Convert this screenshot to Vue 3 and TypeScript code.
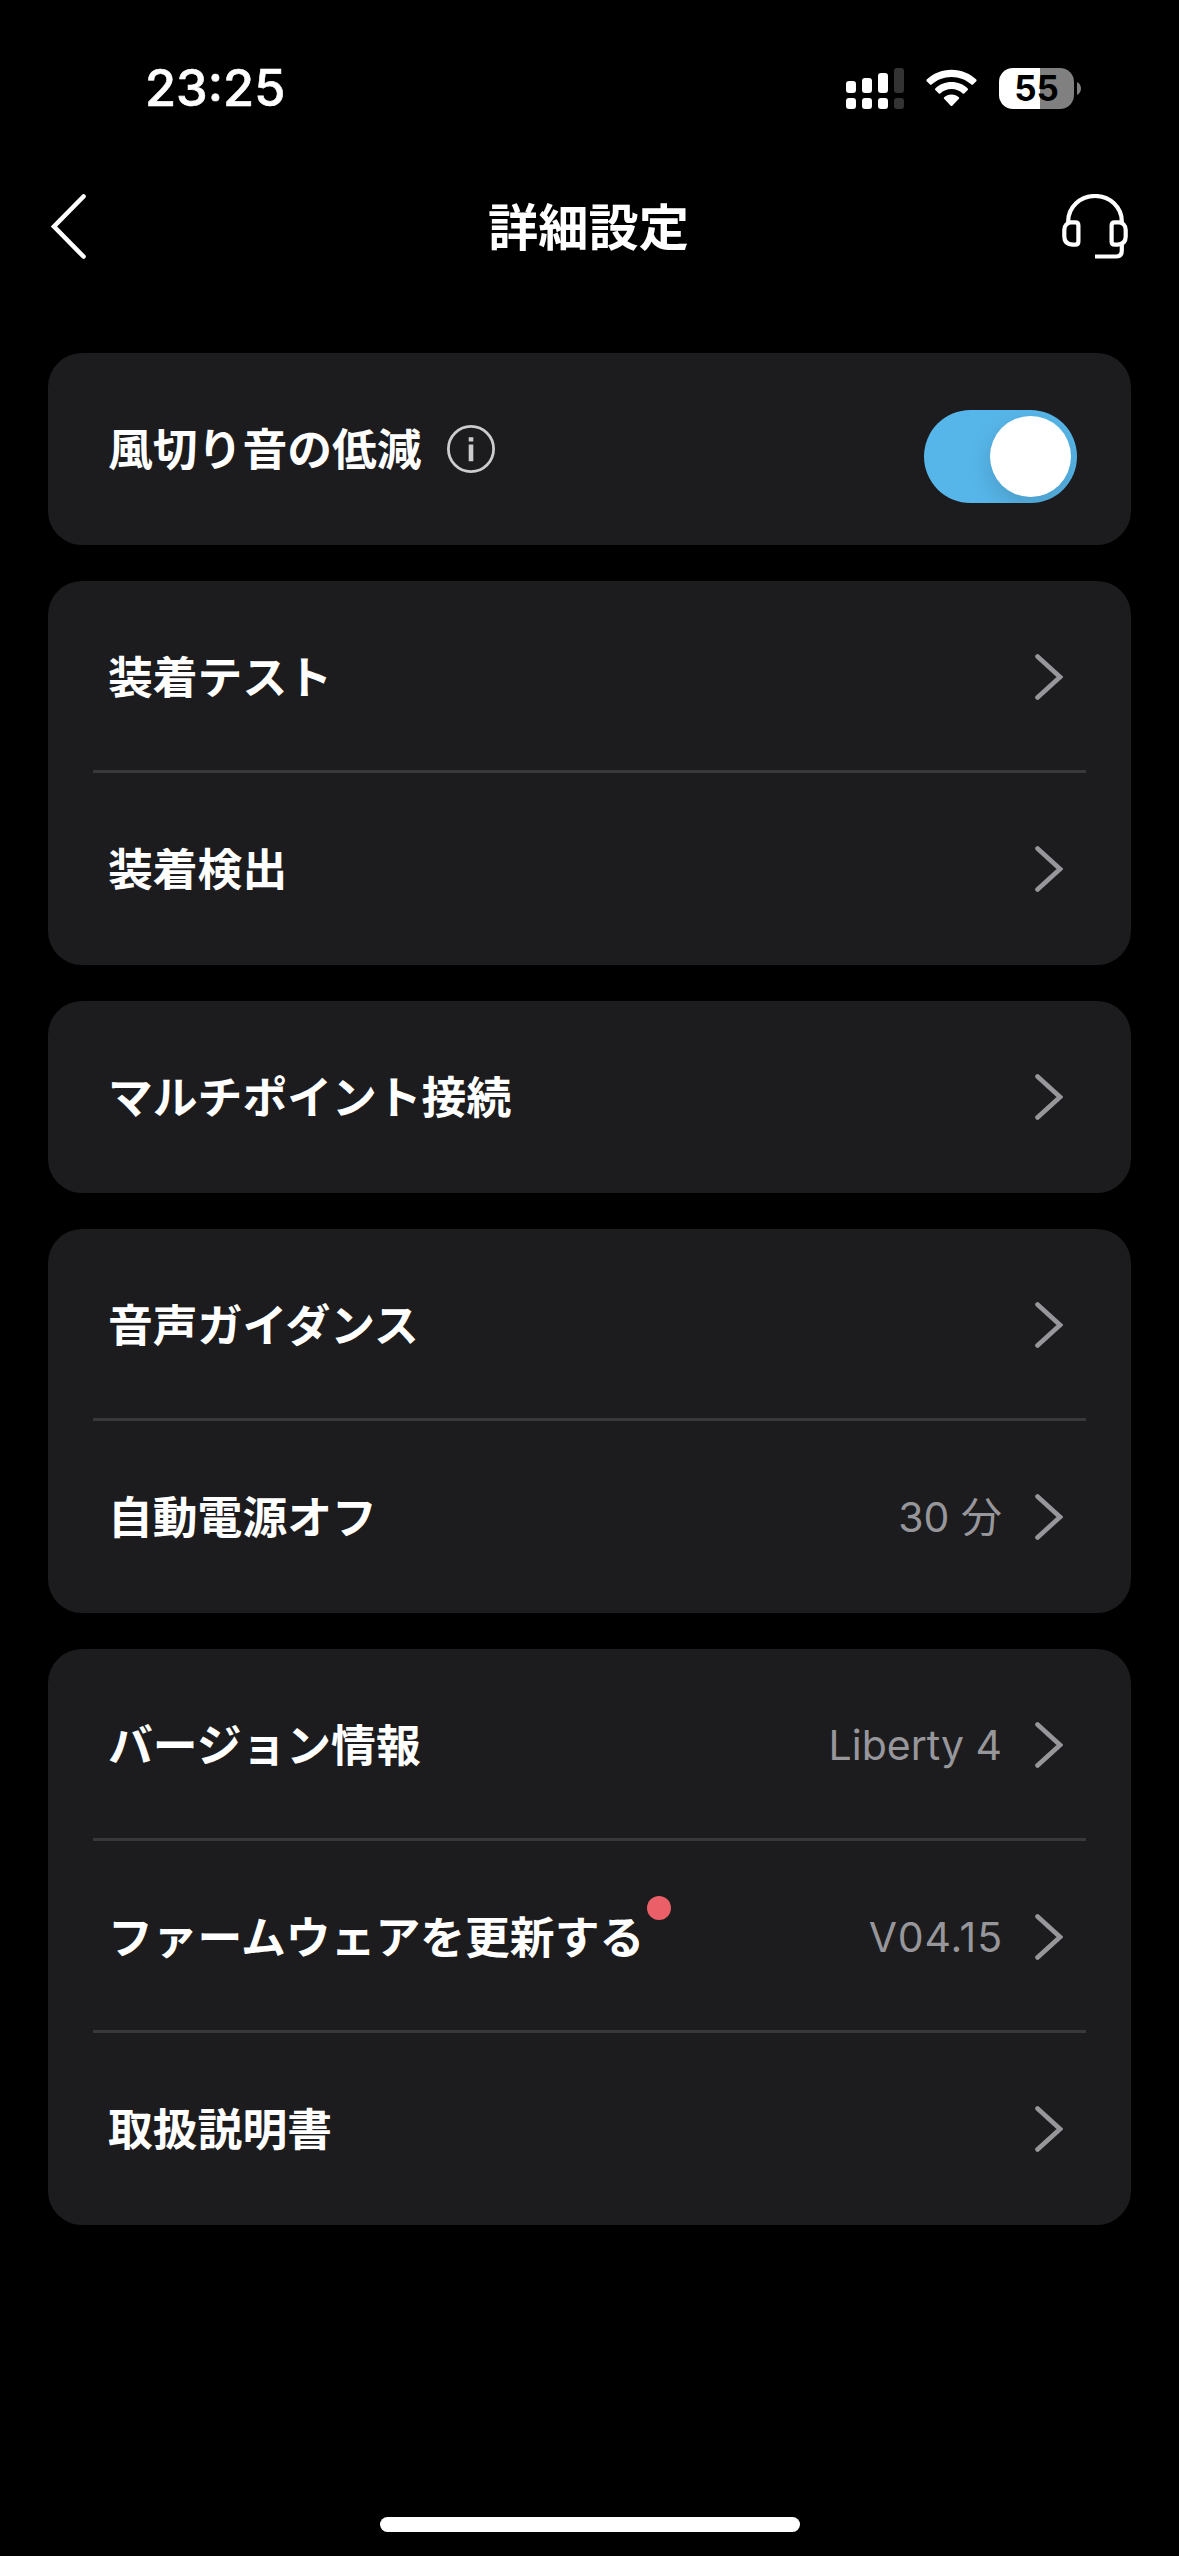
<script setup lang="ts">
import { ref } from 'vue'

interface Row {
  label: string
  value?: string
  version?: boolean
  badge?: boolean
  toggle?: boolean
}

const windNoise = ref(true)

const groups: Row[][] = [
  [{ label: '風切り音の低減', toggle: true }],
  [{ label: '装着テスト' }, { label: '装着検出' }],
  [{ label: 'マルチポイント接続' }],
  [{ label: '音声ガイダンス' }, { label: '自動電源オフ', value: '30 分' }],
  [
    { label: 'バージョン情報', value: 'Liberty 4' },
    { label: 'ファームウェアを更新する', value: 'V04.15', version: true, badge: true },
    { label: '取扱説明書' },
  ],
]
</script>

<template>
  <div class="screen">
    <header class="status">
      <span class="time">23:25</span>
      <div class="indicators">
        <svg class="signal" width="58" height="41" viewBox="0 0 58 41" fill="#fff">
          <rect x="0" y="13" width="10" height="12" rx="3" />
          <rect x="16" y="10" width="10" height="15" rx="3" />
          <rect x="32" y="5" width="10" height="20" rx="3" />
          <rect x="48" y="0" width="10" height="25" rx="3" fill="#333" />
          <rect x="0" y="30" width="10" height="11" rx="3" />
          <rect x="16" y="30" width="10" height="11" rx="3" />
          <rect x="32" y="30" width="10" height="11" rx="3" />
          <rect x="48" y="30" width="10" height="11" rx="3" fill="#333" />
        </svg>
        <svg class="wifi" width="51" height="38" viewBox="0 0 51 38" fill="#fff">
          <path d="M25.500.8C35.300.8 44 4.600 50.300 10.600Q51 11.400 50.300 12.200L47 15.600Q46.200 16.300 45.400 15.600C40.200 10.700 33.200 7.900 25.500 7.900S10.800 10.700 5.600 15.600Q4.800 16.300 4 15.600L.7 12.200Q0 11.400.7 10.600C7 4.600 15.700.8 25.500.8Z" />
          <path d="M25.500 13C31.800 13 37.500 15.400 41.700 19.400Q42.500 20.200 41.700 21L38.200 24.400Q37.500 25.100 36.700 24.400C33.700 21.700 29.800 20.100 25.500 20.100S17.300 21.700 14.300 24.400Q13.500 25.100 12.800 24.400L9.300 21Q8.500 20.200 9.300 19.400C13.500 15.400 19.200 13 25.500 13Z" />
          <path d="M25.500 25.500C28.400 25.500 31 26.600 32.900 28.300Q33.600 29 32.900 29.700L26.300 36.700Q25.500 37.500 24.700 36.700L18.100 29.700Q17.400 29 18.100 28.300C20 26.600 22.600 25.500 25.500 25.500Z" />
        </svg>
        <div class="battery">
          <div class="cell">55</div>
          <svg width="4" height="13" viewBox="0 0 4 13"><path d="M0 0C5.300 2.500 5.300 10.500 0 13Z" fill="#808080" /></svg>
        </div>
      </div>
    </header>

    <nav class="bar">
      <svg class="back" width="40" height="66" viewBox="0 0 40 66" fill="none" stroke="#fff" stroke-width="4.600" stroke-linecap="round" stroke-linejoin="miter">
        <path d="M35.500 2.500L6 32.500L35.500 62.500" />
      </svg>
      <h1>詳細設定</h1>
      <svg class="support" width="66" height="66" viewBox="0 1 66 66" fill="none" stroke="#fff" stroke-width="4.200">
        <path d="M6.200 29.500V28.500C6.200 14 18.300 3 33 3S59.800 14 59.800 28.500V29.500" />
        <path d="M9 29.300H13.200Q16.400 29.300 16.400 32.500V48.500Q16.400 51.700 13.200 51.700H10.500Q2.300 51 2.300 43.500V37Q2.300 30.500 9 29.300Z" />
        <path d="M57 29.300H52.800Q49.600 29.300 49.600 32.500V48.500Q49.600 51.700 52.800 51.700H55.500Q63.700 51 63.700 43.500V37Q63.700 30.500 57 29.300Z" />
        <path d="M59.800 50V57.500Q59.800 63.500 54 63.500H33" />
      </svg>
    </nav>

    <main class="groups">
      <section v-for="(rows, g) in groups" :key="g" class="card">
        <div v-for="row in rows" :key="row.label" class="row">
          <span class="label">{{ row.label }}<i v-if="row.badge" class="badge" /></span>
          <svg v-if="row.toggle" class="info" width="48" height="48" viewBox="0 0 48 48">
            <circle cx="24" cy="24" r="22.600" fill="none" stroke="#ccc" stroke-width="2.800" />
            <path d="M21.700 12.200h4.600v4.400h-4.600zM21.700 19.600h4.600v16.600h-4.600z" fill="#ccc" />
          </svg>
          <span class="spacer" />
          <button v-if="row.toggle" class="switch" :class="{ on: windNoise }" @click="windNoise = !windNoise">
            <span class="knob" />
          </button>
          <template v-else>
            <span v-if="row.value" class="value" :class="{ version: row.version }">{{ row.value }}</span>
            <svg class="chevron" width="28" height="46" viewBox="0 0 28 46" fill="none" stroke="#97969b" stroke-width="4.600" stroke-linecap="round">
              <path d="M2.500 2.500L25 23L2.500 43.500" />
            </svg>
          </template>
        </div>
      </section>
    </main>

    <div class="home" />
  </div>
</template>

<style>
body {
  background: #000;
}
</style>

<style scoped>
.screen {
  box-sizing: border-box;
  width: 1179px;
  height: 2556px;
  display: flex;
  flex-direction: column;
  background: #000;
  color: #fff;
  overflow: hidden;
  font-family: Inter, "Noto Sans CJK JP", sans-serif;
}
.status {
  height: 176px;
  box-sizing: border-box;
  padding: 0 98px 0 145px;
  display: flex;
  justify-content: space-between;
  align-items: center;
}
.time {
  font-size: 50.5px;
  font-weight: 500;
  line-height: 60px;
  -webkit-text-stroke: 0.6px #fff;
}
.indicators {
  display: flex;
  align-items: center;
}
.wifi {
  margin-left: 22px;
}
.battery {
  margin-left: 22px;
  display: flex;
  align-items: center;
  gap: 3px;
}
.cell {
  width: 75px;
  height: 41px;
  border-radius: 14px;
  background: linear-gradient(90deg, #fff 41px, #808080 41px);
  color: #000;
  font-size: 35px;
  font-weight: 700;
  line-height: 41px;
  text-align: center;
}
.bar {
  height: 101px;
  box-sizing: border-box;
  padding: 0 51px 0 48px;
  display: flex;
  justify-content: space-between;
  align-items: center;
}
.back {
  margin-right: 27px;
}
h1 {
  margin: 0;
  padding-top: 2px;
  font-size: 50.2px;
  font-weight: 700;
  line-height: 66px;
}
.groups {
  margin: 76px 48px 0;
  display: flex;
  flex-direction: column;
  gap: 36px;
}
.card {
  border-radius: 34px;
  background: #1c1c1e;
}
.row {
  height: 192px;
  box-sizing: border-box;
  margin: 0 45px;
  padding: 0 23px 0 15px;
  display: flex;
  align-items: center;
}
.row:not(:last-child) {
  border-bottom: 3px solid #38383a;
  padding-top: 3px;
}
.label {
  position: relative;
  padding-top: 2px;
  font-size: 44.8px;
  font-weight: 700;
  line-height: 60px;
  white-space: nowrap;
}
.badge {
  position: absolute;
  left: 100%;
  top: -10px;
  margin-left: 3px;
  width: 24px;
  height: 24px;
  border-radius: 50%;
  background: #eb5f68;
}
.info {
  margin-left: 25px;
}
.spacer {
  flex: 1;
}
.value {
  margin-right: 33px;
  color: #97969b;
  font-size: 41px;
  line-height: 60px;
  font-weight: 400;
}
.value.version {
  margin-right: 32px;
  letter-spacing: 0.9px;
}
.switch {
  width: 153px;
  height: 93px;
  margin: 15px -14px 0 0;
  padding: 6px;
  border: 0;
  border-radius: 47px;
  background: #39393d;
  display: flex;
  overflow: hidden;
}
.switch.on {
  justify-content: flex-end;
  background: #57b6e9;
}
.knob {
  width: 81px;
  height: 81px;
  border-radius: 50%;
  background: #fff;
  box-shadow: 0 9px 24px rgba(0, 0, 0, 0.15);
}
.home {
  width: 420px;
  height: 15px;
  margin: auto auto 24px 380px;
  border-radius: 8px;
  background: #fff;
}
</style>
